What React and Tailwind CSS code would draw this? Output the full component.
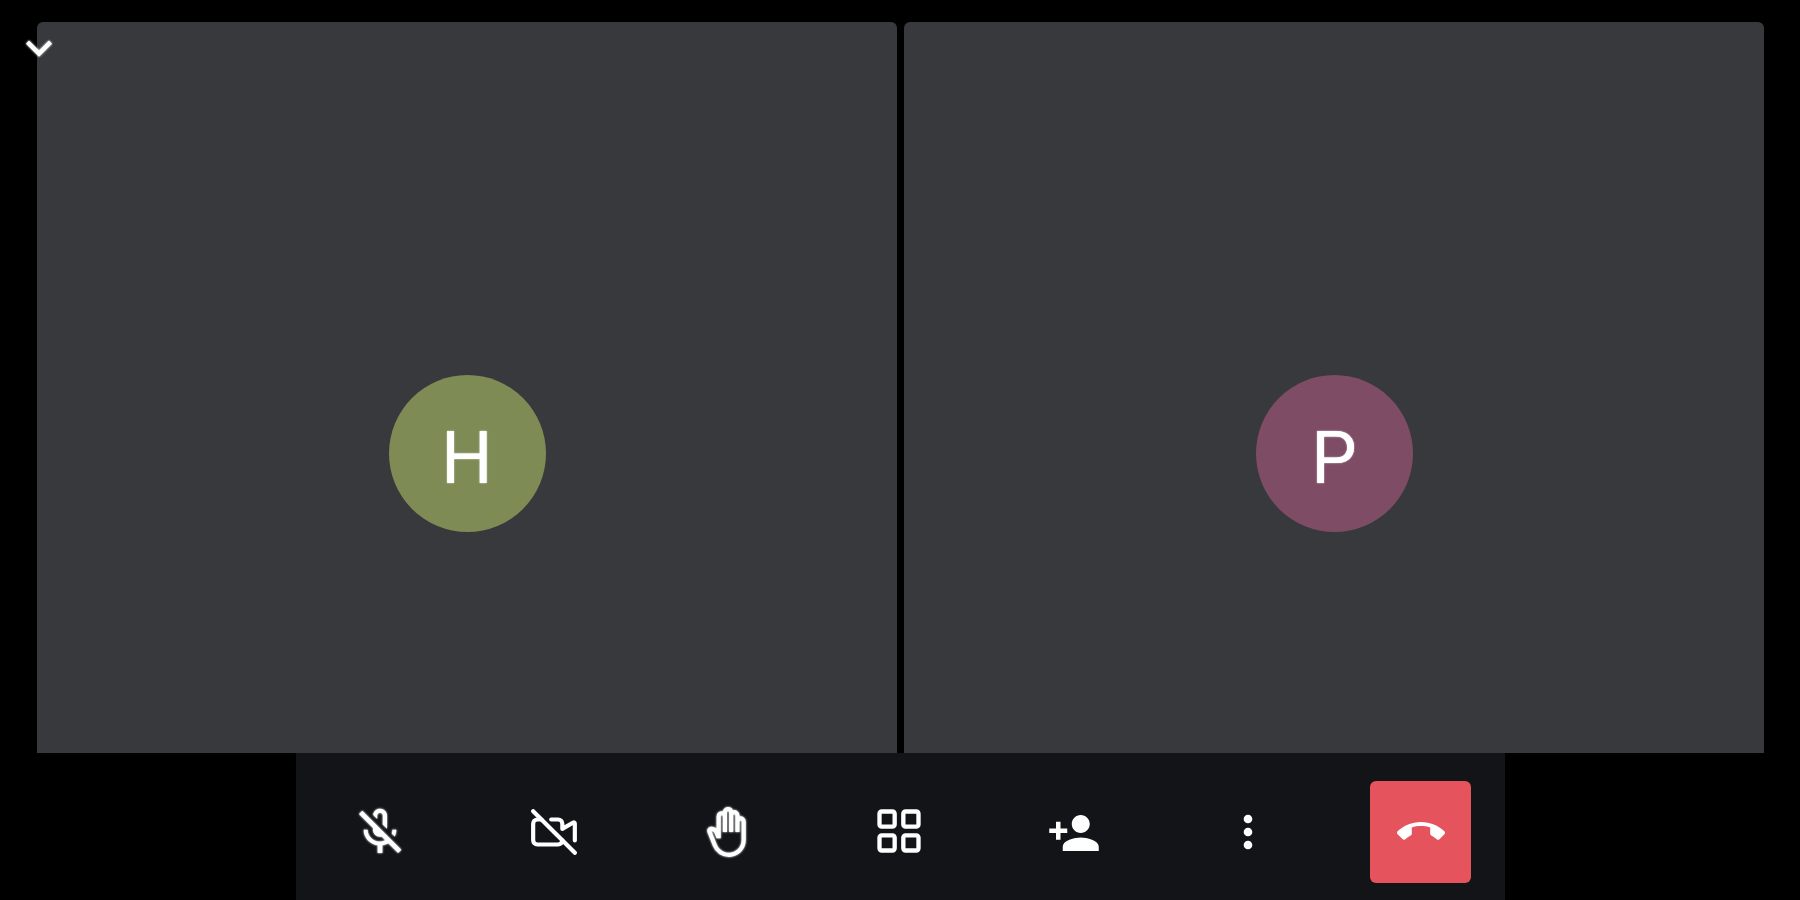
import React from "react";
import { MdKeyboardArrowDown, MdOutlineMicOff, MdOutlineBackHand, MdPersonAdd, MdMoreVert, MdCallEnd } from "react-icons/md";
import { VideoOff, LayoutGrid } from "lucide-react";

function Tile({ letter, color }) {
  return (
    <div className="flex-1 flex items-center justify-center pt-[132px] bg-[#38393d] rounded-t-[6px]">
      <div className={`w-[157px] h-[157px] pt-[10px] rounded-full flex items-center justify-center text-[72px] text-white [text-shadow:0_0_1.5px_white] blur-[0.5px] ${color}`}>
        {letter}
      </div>
    </div>
  );
}

function Slot({ children }) {
  return <div className="w-[102px] h-[102px] flex items-center justify-center text-white blur-[0.6px]">{children}</div>;
}

export default function App() {
  return (
    <div className="relative h-screen flex flex-col bg-black overflow-hidden font-['Roboto',sans-serif]">
      <MdKeyboardArrowDown size={52} className="absolute left-[13px] top-[22px] text-white blur-[0.6px] drop-shadow-[0_0_1px_white]" />
      <div className="flex-1 flex gap-[7px] pl-[37px] pr-[36px] pt-[22px]">
        <Tile letter="H" color="bg-[#7f8b55]" />
        <Tile letter="P" color="bg-[#7e4d65]" />
      </div>
      <div className="h-[147px] ml-[296px] mr-[295px] bg-[#131417] flex items-start justify-between pt-[28px] pl-[33px] pr-[34px]">
        <Slot><MdOutlineMicOff size={56} className="drop-shadow-[0_0_1px_white]" /></Slot>
        <Slot><VideoOff size={50} strokeWidth={2} /></Slot>
        <Slot><MdOutlineBackHand size={50} className="drop-shadow-[0_0_1px_white]" /></Slot>
        <Slot><LayoutGrid size={52} strokeWidth={2} className="mb-[3px] mr-[4px]" /></Slot>
        <Slot><MdPersonAdd size={54} className="mt-[2px]" /></Slot>
        <Slot><MdMoreVert size={52} /></Slot>
        <div className="w-[101px] h-[102px] rounded-[6px] bg-[#e5535d] flex items-center justify-center text-white blur-[0.5px]">
          <MdCallEnd size={48} className="mb-[1px]" />
        </div>
      </div>
    </div>
  );
}
